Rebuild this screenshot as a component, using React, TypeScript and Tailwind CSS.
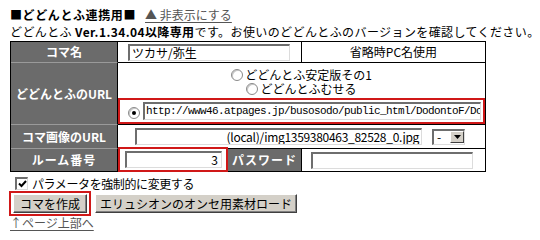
import React from 'react'

const inset =
  'bg-white border-t-2 border-l-2 border-b border-r border-t-[#6e6e6e] border-l-[#6e6e6e] border-b-[#dcdcdc] border-r-[#dcdcdc]'

const head =
  'bg-[#6b6b6b] text-white font-bold flex items-center justify-center whitespace-nowrap border-r border-r-black'

const cell = 'bg-white border-r border-b border-black'

const Radio = ({ checked }: { checked?: boolean }) => (
  <span className="inline-flex w-[12px] h-[12px] shrink-0 items-center justify-center rounded-full border border-[#8a8a8a] bg-white shadow-[inset_1px_1px_0_#c8c8c8]">
    {checked && <span className="w-[4px] h-[4px] rounded-full bg-black" />}
  </span>
)

const Button = ({ label, w }: { label: string; w: string }) => (
  <div
    className={`${w} h-[19px] flex items-center justify-center bg-[#d4d0c8] border border-t-white border-l-white border-r-[#404040] border-b-[#404040] shadow-[inset_-1px_-1px_0_#808080] text-[12px] text-black`}
  >
    {label}
  </div>
)

export default function App() {
  return (
    <div className="w-[540px] h-[240px] overflow-hidden bg-white pl-[10px] pt-[7px] text-[12px] leading-none text-black font-['Noto_Sans_CJK_JP','Noto_Sans',sans-serif]">
      {/* title */}
      <div className="h-[16px] flex items-center whitespace-nowrap">
        <b className="tracking-[0.6px]">■どどんとふ連携用■</b>
        <a className="ml-[9px] text-[#555] underline underline-offset-2">▲ 非表示にする</a>
      </div>
      <div className="h-[18px] flex items-center whitespace-nowrap tracking-[0.4px]">
        どどんとふ&nbsp;<b>Ver.1.34.04以降専用</b>です。お使いのどどんとふのバージョンを確認してください。
      </div>

      {/* table */}
      <div className="grid w-[476px] grid-cols-[107px_110px_74px_184px] grid-rows-[21px_62px_24px_23px] border-l border-t border-black">
        {/* row 1 */}
        <div className={`${head} border-b border-b-[#9a9a9a]`}>コマ名</div>
        <div className={`${cell} col-span-2 flex items-center`}>
          <div className={`${inset} ml-[10px] w-[162px] h-[17px] flex items-center pl-[2px] text-[12px]`}>
            ツカサ/弥生
          </div>
        </div>
        <div className={`${cell} flex items-center justify-center`}>省略時PC名使用</div>

        {/* row 2 */}
        <div className={`${head} border-b border-b-[#9a9a9a]`}>どどんとふのURL</div>
        <div className={`${cell} col-span-3 flex flex-col`}>
          <div className="pt-[4px]" />
          <div className="h-[15px] flex items-center justify-center gap-[2px]">
            <Radio />
            <span>どどんとふ安定版その1</span>
          </div>
          <div className="h-[14px] flex items-center justify-center gap-[2px]">
            <Radio />
            <span>どどんとふむせる</span>
          </div>
          <div className="mt-[2px] flex-1 border-2 border-[#d01818] flex items-center">
            <span className="ml-[8px]">
              <Radio checked />
            </span>
            <div
              className={`${inset} ml-[3px] w-[338px] h-[18px] flex items-center overflow-hidden whitespace-nowrap pl-[1px] font-['Liberation_Mono',monospace] text-[11px] tracking-[-0.6px]`}
            >
              http://www46.atpages.jp/busosodo/public_html/DodontoF/DodontoF.swf
            </div>
          </div>
        </div>

        {/* row 3 */}
        <div className={`${head} border-b border-b-[#9a9a9a]`}>コマ画像のURL</div>
        <div className={`${cell} col-span-3 flex items-center`}>
          <div
            className={`${inset} ml-[17px] w-[287px] h-[17px] flex items-center justify-end overflow-hidden whitespace-nowrap pr-[2px] tracking-[-0.3px]`}
          >
            (local)/img1359380463_82528_0.jpg
          </div>
          <div className={`${inset} ml-[10px] w-[33px] h-[16px] flex items-center justify-between`}>
            <span className="pl-[3px]">-</span>
            <span className="w-[14px] h-[12px] flex items-center justify-center bg-[#d4d0c8] border border-t-white border-l-white border-r-[#404040] border-b-[#404040]">
              <svg width="7" height="4" viewBox="0 0 7 4">
                <path d="M0 0h7L3.5 4z" fill="#000" />
              </svg>
            </span>
          </div>
        </div>

        {/* row 4 */}
        <div className={`${head} border-b border-b-black tracking-[1px]`}>ルーム番号</div>
        <div className="bg-white border-2 border-[#d01818] -mt-[2px] flex items-center">
          <div className={`${inset} ml-[5px] w-[97px] h-[17px] flex items-center justify-end pr-[3px]`}>3</div>
        </div>
        <div className={`${head} border-b border-b-black tracking-[1px]`}>パスワード</div>
        <div className={`${cell} flex items-center`}>
          <div className={`${inset} ml-[9px] w-[162px] h-[17px]`} />
        </div>
      </div>

      {/* checkbox */}
      <div className="mt-[4px] h-[15px] flex items-center">
        <span className="ml-[5px] w-[13px] h-[13px] flex items-center justify-center bg-white border-t-2 border-l-2 border-b border-r border-t-[#6e6e6e] border-l-[#6e6e6e] border-b-[#dcdcdc] border-r-[#dcdcdc]">
          <svg width="9" height="8" viewBox="0 0 9 8">
            <path d="M1 3.5l2.5 2.5L8 1" stroke="#000" strokeWidth="2" fill="none" />
          </svg>
        </span>
        <span className="ml-[4px] tracking-[-0.4px]">パラメータを強制的に変更する</span>
      </div>

      {/* buttons */}
      <div className="h-[25px] flex items-center">
        <div className="-ml-[1px] w-[82px] h-[25px] border-2 border-[#d01818] flex items-center justify-center">
          <Button label="コマを作成" w="w-[74px]" />
        </div>
        <div className="ml-[4px]">
          <Button label="エリュシオンのオンセ用素材ロード" w="w-[202px]" />
        </div>
      </div>

      <div className="h-[14px] flex items-center">
        <a className="text-[#555] underline underline-offset-2">↑ページ上部へ</a>
      </div>
    </div>
  )
}
